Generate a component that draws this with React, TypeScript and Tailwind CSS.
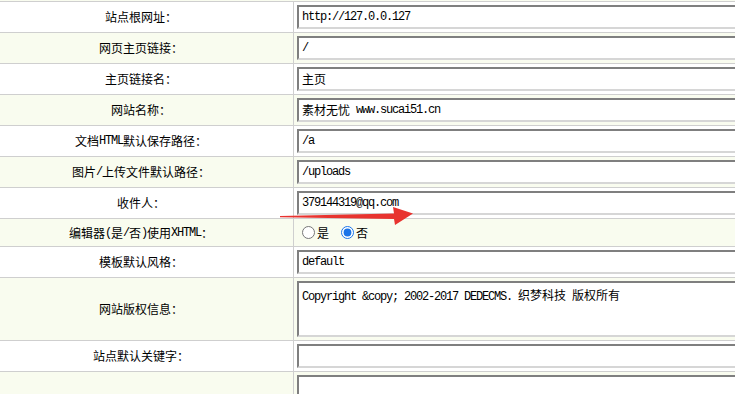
import React from "react";

type Field =
  | { kind: "input"; value: string }
  | { kind: "radio" }
  | { kind: "textarea"; value: string };

interface Row {
  label: string;
  field: Field;
}

const rows: Row[] = [
  { label: "站点根网址：", field: { kind: "input", value: "http://127.0.0.127" } },
  { label: "网页主页链接：", field: { kind: "input", value: "/" } },
  { label: "主页链接名：", field: { kind: "input", value: "主页" } },
  { label: "网站名称：", field: { kind: "input", value: "素材无忧 www.sucai51.cn" } },
  { label: "文档HTML默认保存路径：", field: { kind: "input", value: "/a" } },
  { label: "图片/上传文件默认路径：", field: { kind: "input", value: "/uploads" } },
  { label: "收件人：", field: { kind: "input", value: "379144319@qq.com" } },
  { label: "编辑器(是/否)使用XHTML：", field: { kind: "radio" } },
  { label: "模板默认风格：", field: { kind: "input", value: "default" } },
  {
    label: "网站版权信息：",
    field: { kind: "textarea", value: "Copyright &copy; 2002-2017 DEDECMS. 织梦科技 版权所有" },
  },
  { label: "站点默认关键字：", field: { kind: "input", value: "" } },
  { label: "", field: { kind: "textarea", value: "" } },
];

// SimSun-like: half-width latin, full-width CJK
function Mixed({ text }: { text: string }) {
  const parts = text.match(/[\x00-\xff]+|[^\x00-\xff]+/g) ?? [];
  return (
    <>
      {parts.map((p, i) =>
        /^[\x00-\xff]/.test(p) ? (
          <span key={i} className="font-['Liberation_Mono',monospace] tracking-[-1.2px] whitespace-pre">
            {p}
          </span>
        ) : (
          <span key={i}>{p}</span>
        )
      )}
    </>
  );
}

const boxBorder =
  "border-2 border-t-[#7f7f7f] border-l-[#7f7f7f] border-b-[#d6d6d6] border-r-[#d6d6d6] bg-white";

function FieldCell({ field }: { field: Field }) {
  if (field.kind === "radio") {
    return (
      <div className="h-[27px] flex items-center pl-[3px]">
        <label className="flex items-center">
          <input type="radio" name="xhtml" className="w-[13px] h-[13px] m-0 ml-[5px] mr-[2px] accent-[#1a73e8]" />
          <span>是</span>
        </label>
        <label className="flex items-center">
          <input
            type="radio"
            name="xhtml"
            defaultChecked
            className="w-[13px] h-[13px] m-0 ml-[12px] mr-[2px] accent-[#1a73e8]"
          />
          <span>否</span>
        </label>
      </div>
    );
  }
  if (field.kind === "textarea") {
    return (
      <div className="py-[3px] pl-[3px]">
        <div className={`w-[460px] h-[56px] pt-[4px] px-[3px] leading-[16px] ${boxBorder}`}>
          <Mixed text={field.value} />
        </div>
      </div>
    );
  }
  return (
    <div className="py-[3px] pl-[3px]">
      <div className={`w-[460px] h-[24px] flex items-center px-[3px] leading-[14px] ${boxBorder}`}>
        <Mixed text={field.value} />
      </div>
    </div>
  );
}

export default function App() {
  return (
    <div className="relative w-[735px] h-[394px] overflow-hidden bg-white text-[12px] text-black font-['Noto_Sans_CJK_SC',sans-serif]">
      <div className="h-px bg-[#f9fcef]" />
      {rows.map((row, i) => (
        <div
          key={i}
          className={`flex border-t border-[#cfcfcf] ${i % 2 === 1 ? "bg-[#f9fcef]" : "bg-white"}`}
        >
          <div className="w-[294px] shrink-0 border-r border-[#cfcfcf] flex items-center justify-center pr-[11px]">
            <Mixed text={row.label} />
          </div>
          <div className="flex-1">
            <FieldCell field={row.field} />
          </div>
        </div>
      ))}

      {/* red annotation arrow */}
      <svg
        className="absolute left-0 top-0 pointer-events-none"
        width="735"
        height="394"
        viewBox="0 0 735 394"
      >
        <polygon
          points="280,216 394,213.5 393,207 413,213.5 395,225 394,219 280,217.2"
          fill="#e8332f"
        />
      </svg>
    </div>
  );
}
